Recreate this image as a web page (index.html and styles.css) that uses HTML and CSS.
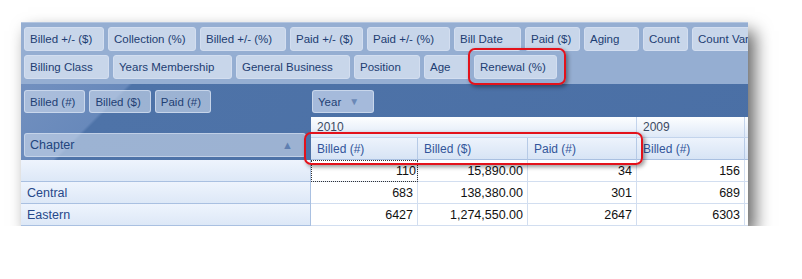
FILE: index.html
```html
<!DOCTYPE html>
<html lang="en">
<head>
  <meta charset="UTF-8" />
  <title>Pivot Grid</title>
  <link rel="stylesheet" href="styles.css">
</head>
<body>

<div class="panel">

  <div class="field-area">
    <div class="field-row row-filters">
      <span class="field">Billed +/- ($)</span>
      <span class="field">Collection (%)</span>
      <span class="field">Billed +/- (%)</span>
      <span class="field">Paid +/- ($)</span>
      <span class="field">Paid +/- (%)</span>
      <span class="field">Bill Date</span>
      <span class="field">Paid ($)</span>
      <span class="field">Aging</span>
      <span class="field">Count</span>
      <span class="field">Count Var</span>
    </div>
    <div class="field-row row-hidden">
      <span class="field">Billing Class</span>
      <span class="field">Years Membership</span>
      <span class="field">General Business</span>
      <span class="field">Position</span>
      <span class="field">Age</span>
      <span class="field">Renewal (%)</span>
    </div>
  </div>

  <div class="pivot">
    <div class="data-fields">
      <span class="field dark">Billed (#)</span>
      <span class="field dark">Billed ($)</span>
      <span class="field dark">Paid (#)</span>
    </div>
    <div class="col-fields">
      <span class="field dark year">Year <span class="arrow">&#9660;</span></span>
    </div>

    <div class="row-fields">
      <div class="chapter">Chapter <span class="arrow">&#9650;</span></div>
    </div>
    <div class="year-head span3">2010</div>
    <div class="year-head">2009</div>
    <div class="year-head"></div>

    <div class="measure">Billed (#)</div>
    <div class="measure">Billed ($)</div>
    <div class="measure">Paid (#)</div>
    <div class="measure">Billed (#)</div>
    <div class="measure"></div>

    <div class="row-head"></div>
    <div class="cell focus">110</div>
    <div class="cell">15,890.00</div>
    <div class="cell">34</div>
    <div class="cell">156</div>
    <div class="cell"></div>

    <div class="row-head">Central</div>
    <div class="cell">683</div>
    <div class="cell">138,380.00</div>
    <div class="cell">301</div>
    <div class="cell">689</div>
    <div class="cell"></div>

    <div class="row-head">Eastern</div>
    <div class="cell">6427</div>
    <div class="cell">1,274,550.00</div>
    <div class="cell">2647</div>
    <div class="cell">6303</div>
    <div class="cell"></div>
  </div>

  <div class="highlight hl-renewal"></div>
  <div class="highlight hl-measures"></div>
</div>

</body>
</html>
```

FILE: styles.css
```css
body {
  margin: 0;
  background: #fff;
  font-family: "Liberation Sans", Arial, sans-serif;
  font-size: 12px;
}
.panel {
  position: relative;
  margin: 22px 0 0 21px;
  width: 727px;
  height: 204px;
  box-shadow: 7px 9px 16px rgba(0,0,0,0.6);
}
.field-area {
  background: #95aed2;
  height: 62px;
  box-sizing: border-box;
  padding: 4px 0 0 3px;
  border-top: 1px solid #b3c5e0;
  display: flex;
  flex-direction: column;
  gap: 4px;
  overflow: hidden;
}
.field-row {
  display: grid;
  gap: 4px;
  white-space: nowrap;
}
.row-filters {
  grid-template-columns: 80px 88px 86px 73px 83px 67px 55px 55px 45px 80px;
}
.row-hidden {
  grid-template-columns: 85px 119px 114px 66px 46px 83px;
}
.field {
  display: inline-flex;
  align-items: center;
  box-sizing: border-box;
  height: 24px;
  padding: 0 0 0 5px;
  background: #c8d6ea;
  border: 1px solid #d3def0;
  border-radius: 3px;
  color: #1d3d72;
  font-size: 11.5px;
  overflow: hidden;
}
.pivot {
  display: grid;
  grid-template-columns: 290px 107px 110px 109px 108px 3px;
  grid-template-rows: 33px 21px 22px 22px 22px 22px;
  background: linear-gradient(135deg, #7290bf 0, #6889bb 76px, #4e73a8 79px, #4a6fa5 100%);
  overflow: hidden;
}
.data-fields {
  display: flex;
  gap: 4px;
  padding: 6px 0 0 3px;
}
.field.dark {
  height: 23px;
  padding-right: 9px;
  background: rgba(205,218,238,0.62);
  border-color: rgba(215,226,242,0.7);
  color: #1f3f74;
}
.col-fields {
  grid-column: 2 / -1;
  padding: 6px 0 0 1px;
}
.field.year {
  width: 62px;
  background: #a5badb;
}
.arrow {
  color: #6a88b7;
  font-size: 10px;
  margin-left: 8px;
}
.row-fields {
  grid-row: 2 / 4;
  display: flex;
  align-items: flex-end;
  padding: 0 5px 3px 3px;
}
.chapter {
  flex: 1;
  height: 24px;
  box-sizing: border-box;
  display: flex;
  align-items: center;
  justify-content: space-between;
  padding: 0 12px 0 5px;
  background: rgba(205,218,238,0.62);
  border: 1px solid rgba(215,226,242,0.6);
  border-radius: 3px;
  color: #22457d;
  font-size: 12.5px;
}
.chapter .arrow {
  color: #5f7fb1;
  font-size: 11px;
}
.year-head {
  background: linear-gradient(#fdfeff, #dfe9f7);
  border-right: 1px solid #c3d4ec;
  border-bottom: 1px solid #c3d4ec;
  padding: 3px 0 0 6px;
  color: #3b4a62;
  overflow: hidden;
}
.year-head.span3 {
  grid-column: span 3;
}
.measure {
  background: linear-gradient(#edf3fc, #d7e4f5);
  border-right: 1px solid #b6cae6;
  border-bottom: 1px solid #a9c0e1;
  padding: 4px 0 0 6px;
  color: #32559a;
  overflow: hidden;
  white-space: nowrap;
}
.row-head {
  background: linear-gradient(#eef4fd, #dde8f7);
  border-right: 1px solid #a9c0e1;
  border-bottom: 1px solid #a9c0e1;
  padding: 4px 0 0 6px;
  color: #26488a;
  font-size: 12.5px;
}
.cell {
  background: #fff;
  border-right: 1px solid #d2def0;
  border-bottom: 1px solid #d2def0;
  text-align: right;
  padding: 4px 4px 0 0;
  color: #111;
  font-size: 12.5px;
  overflow: hidden;
}
.cell.focus {
  outline: 1px dotted #333;
  outline-offset: -1px;
  padding-right: 1px;
}
.highlight {
  position: absolute;
  box-sizing: border-box;
  border: 2px solid #e3121b;
  border-radius: 7px;
  box-shadow: 2px 2px 4px rgba(0,0,0,0.4);
}
.hl-renewal {
  left: 447px;
  top: 26px;
  width: 98px;
  height: 37px;
}
.hl-measures {
  left: 283px;
  top: 110px;
  width: 339px;
  height: 33px;
}
```
